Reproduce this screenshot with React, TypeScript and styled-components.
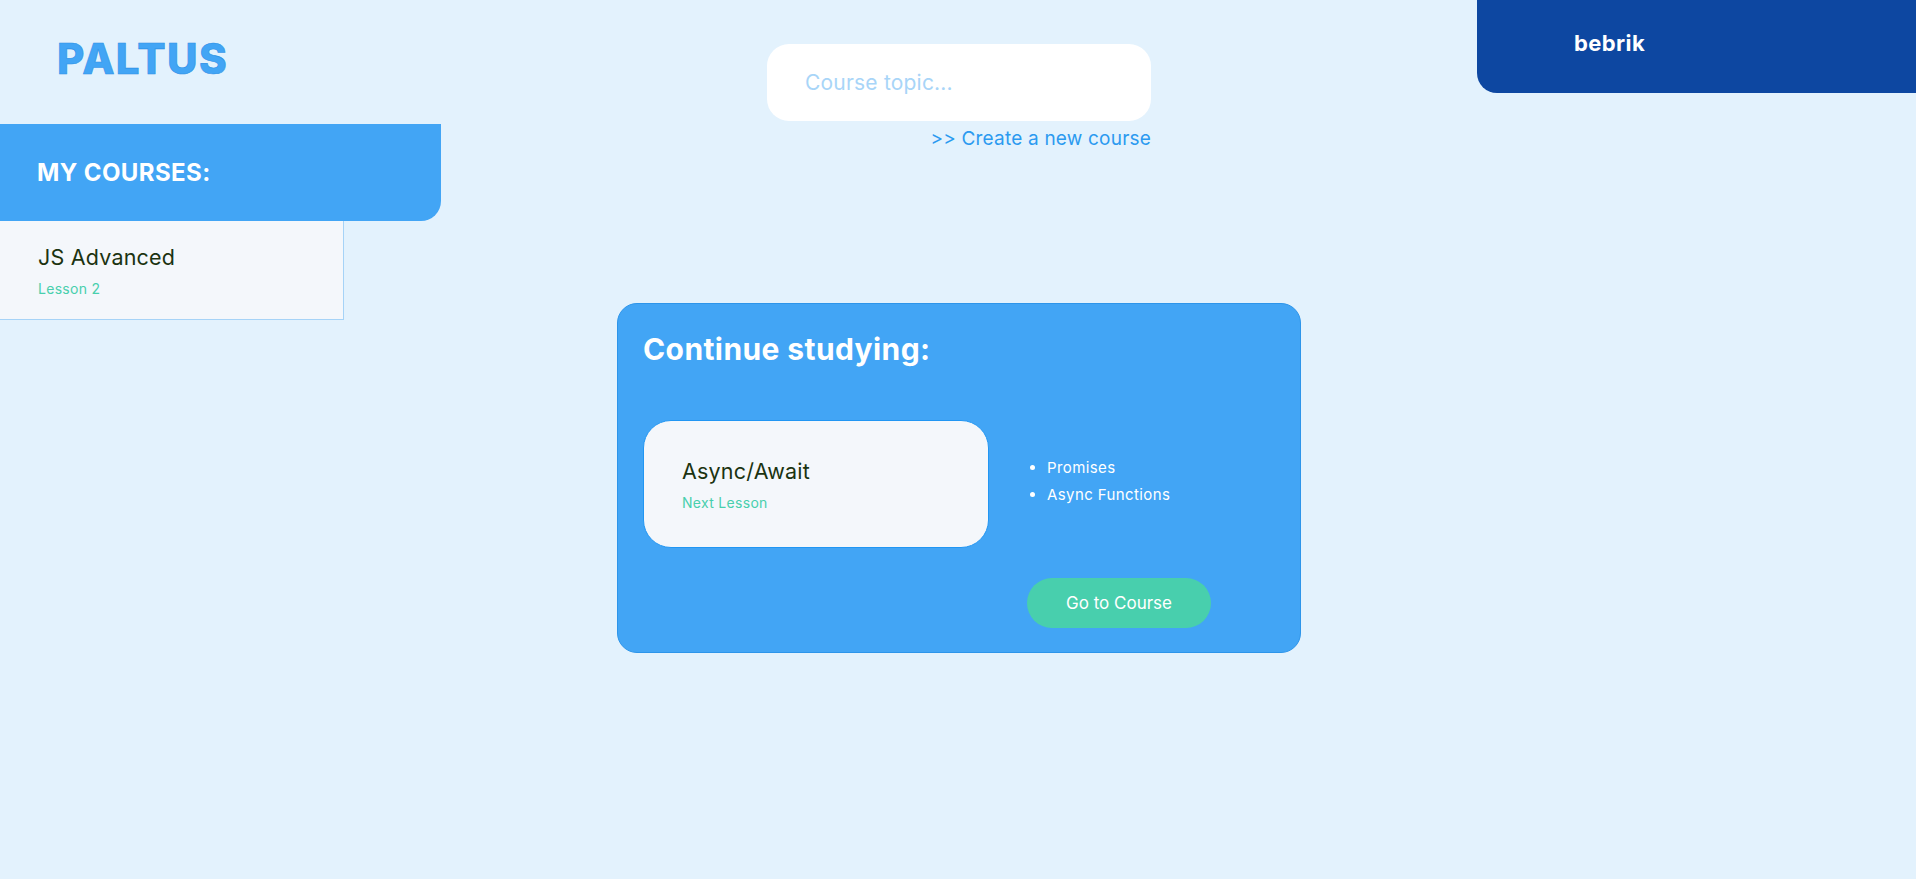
import * as React from 'react';
import styled, { createGlobalStyle } from 'styled-components';

const GlobalStyle = createGlobalStyle`
  html, body {
    margin: 0;
    padding: 0;
    background: #e3f2fd;
    font-family: Inter, "Open Sans", sans-serif;
  }
`;

const Page = styled.div`
  display: flex;
  min-height: 879px;
  background: #e3f2fd;
`;

const LeftColumn = styled.aside`
  width: 441px;
  display: flex;
  flex-direction: column;
`;

const Logo = styled.div`
  height: 124px;
  box-sizing: border-box;
  padding: 33px 0 0 57px;
  font-size: 42px;
  font-weight: 800;
  color: #42a5f5;
  letter-spacing: 1.4px;
  -webkit-text-stroke: 0.6px #2e90e6;
`;

const SideHeader = styled.div`
  height: 97px;
  box-sizing: border-box;
  display: flex;
  align-items: center;
  padding-left: 37px;
  background: #42a5f5;
  border-bottom-right-radius: 20px;
  color: #fff;
  font-size: 24px;
  font-weight: 700;
  letter-spacing: 0.4px;
`;

const CourseItem = styled.div`
  width: 344px;
  height: 99px;
  box-sizing: border-box;
  padding: 24px 0 0 38px;
  background: #f4f7fb;
  border: 1px solid #a6d3f7;
  border-left: none;
  border-top: none;
`;

const CourseTitle = styled.div`
  font-size: 21.5px;
  letter-spacing: 0.2px;
  color: #1b3310;
  line-height: 1.2;
`;

const CourseSub = styled.div`
  margin-top: 9px;
  font-size: 14px;
  letter-spacing: 0.3px;
  color: #48cfad;
`;

const Center = styled.main`
  flex: 1;
  display: flex;
  flex-direction: column;
`;

const SearchBlock = styled.div`
  align-self: center;
  width: 384px;
  margin-top: 44px;
  display: flex;
  flex-direction: column;
  align-items: flex-end;
`;

const SearchInput = styled.input`
  width: 100%;
  height: 77px;
  box-sizing: border-box;
  border: none;
  outline: none;
  border-radius: 22px;
  background: #fff;
  padding: 0 0 0 38px;
  font-family: inherit;
  font-size: 21px;
  letter-spacing: 0.2px;
  color: #1b3310;
  &::placeholder {
    color: #a8d5f8;
  }
`;

const CreateLink = styled.a`
  margin-top: 6px;
  font-size: 19px;
  letter-spacing: 0.2px;
  color: #2b9af0;
  text-decoration: none;
  cursor: pointer;
`;

const StudyCard = styled.section`
  margin: 153px 0 0 176px;
  width: 684px;
  height: 350px;
  box-sizing: border-box;
  padding: 27px 25px 0;
  background: #42a5f5;
  border: 1px solid #2d95ea;
  border-radius: 20px;
`;

const StudyTitle = styled.h2`
  margin: 0;
  font-size: 30px;
  font-weight: 700;
  letter-spacing: 0.4px;
  color: #fff;
  line-height: 36px;
`;

const StudyGrid = styled.div`
  margin-top: 53px;
  display: grid;
  grid-template-columns: 346px auto;
  column-gap: 38px;
  row-gap: 30px;
`;

const LessonCard = styled.div`
  height: 128px;
  box-sizing: border-box;
  padding: 38px 0 0 38px;
  background: #f4f7fb;
  border: 1px solid #2196f3;
  border-radius: 28px;
`;

const Topics = styled.ul`
  align-self: start;
  margin: 34px 0 0;
  padding: 0 0 0 20px;
  color: #fff;
  font-size: 15px;
  letter-spacing: 0.4px;
  li {
    line-height: 27px;
  }
`;

const GoButton = styled.button`
  grid-column: 2;
  justify-self: start;
  width: 184px;
  height: 50px;
  border: none;
  border-radius: 25px;
  background: #48cfad;
  color: #fff;
  font-family: inherit;
  font-size: 17px;
  cursor: pointer;
`;

const RightColumn = styled.div`
  width: 439px;
`;

const UserBox = styled.div`
  height: 93px;
  box-sizing: border-box;
  padding: 30px 0 0 97px;
  background: #0d47a1;
  border-bottom-left-radius: 20px;
  color: #fff;
  font-size: 22px;
  font-weight: 700;
  letter-spacing: 0.4px;
`;

export default function App() {
  const [topic, setTopic] = React.useState('');
  return (
    <Page>
      <GlobalStyle />
      <LeftColumn>
        <Logo>PALTUS</Logo>
        <SideHeader>MY COURSES:</SideHeader>
        <CourseItem>
          <CourseTitle>JS Advanced</CourseTitle>
          <CourseSub>Lesson 2</CourseSub>
        </CourseItem>
      </LeftColumn>
      <Center>
        <SearchBlock>
          <SearchInput
            placeholder="Course topic..."
            value={topic}
            onChange={e => setTopic(e.target.value)}
          />
          <CreateLink>&gt;&gt; Create a new course</CreateLink>
        </SearchBlock>
        <StudyCard>
          <StudyTitle>Continue studying:</StudyTitle>
          <StudyGrid>
            <LessonCard>
              <CourseTitle>Async/Await</CourseTitle>
              <CourseSub>Next Lesson</CourseSub>
            </LessonCard>
            <Topics>
              <li>Promises</li>
              <li>Async Functions</li>
            </Topics>
            <GoButton>Go to Course</GoButton>
          </StudyGrid>
        </StudyCard>
      </Center>
      <RightColumn>
        <UserBox>bebrik</UserBox>
      </RightColumn>
    </Page>
  );
}
